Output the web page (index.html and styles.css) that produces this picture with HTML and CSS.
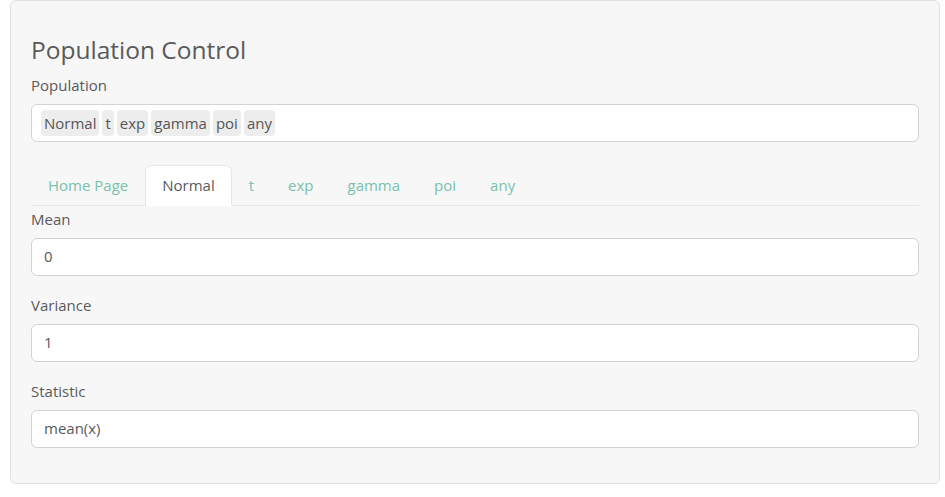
FILE: index.html
```html
<!DOCTYPE html>
<html>
<head>
<meta charset="utf-8">
<link rel="stylesheet" href="styles.css">
</head>
<body>
<div class="page">
  <div class="well">
    <h3 class="title">Population Control</h3>
    <div class="group group-pop">
      <label class="label">Population</label>
      <div class="tag-input">
        <span class="tag">Normal</span><span class="tag">t</span><span class="tag">exp</span><span class="tag">gamma</span><span class="tag">poi</span><span class="tag">any</span>
      </div>
    </div>
    <ul class="tabs">
      <li class="tab">Home Page</li>
      <li class="tab active">Normal</li>
      <li class="tab">t</li>
      <li class="tab">exp</li>
      <li class="tab">gamma</li>
      <li class="tab">poi</li>
      <li class="tab">any</li>
    </ul>
    <div class="tab-body">
      <div class="group">
        <label class="label">Mean</label>
        <div class="field">0</div>
      </div>
      <div class="group">
        <label class="label">Variance</label>
        <div class="field">1</div>
      </div>
      <div class="group last">
        <label class="label">Statistic</label>
        <div class="field">mean(x)</div>
      </div>
    </div>
  </div>
</div>
</body>
</html>
```
FILE: styles.css
```css
* { box-sizing: border-box; }
html, body { margin: 0; padding: 0; background: #ffffff; }
body {
  font-family: "Open Sans", "Noto Sans", sans-serif;
  font-size: 15px;
  line-height: 1.5;
  color: #5a5a5a;
}
.page { padding: 0 5px 0 10px; }
.well {
  background: #f7f7f7;
  border: 1px solid #e0e0e0;
  border-radius: 6px;
  padding: 20px 20px 20px 20px;
}
.title {
  font-size: 24.5px;
  font-weight: 400;
  line-height: 1.1;
  margin: 16px 0 10px;
  color: #5a5a5a;
}
.label { display: block; margin-bottom: 8px; }
.group { margin-bottom: 17.5px; }
.group-pop { margin-bottom: 23px; }
.group.last { margin-bottom: 15px; }
.tag-input {
  height: 38px;
  background: #fff;
  border: 1px solid #ced4da;
  border-radius: 6px;
  padding: 5px 9px;
  display: flex;
  gap: 3px;
}
.tag {
  height: 26px;
  line-height: 26px;
  padding: 0 3px;
  background: #ededed;
  border-radius: 4px;
  color: #555;
}
.tabs {
  list-style: none;
  margin: 0;
  padding: 0;
  display: flex;
  border-bottom: 1px solid #e6e6e6;
}
.tab {
  padding: 8px 16px;
  border: 1px solid transparent;
  border-top-left-radius: 6px;
  border-top-right-radius: 6px;
  margin-bottom: -1px;
  color: #78c2ad;
}
.tab.active {
  background: #fff;
  color: #5a5a5a;
  border-color: #e6e6e6 #e6e6e6 #fff;
}
.tab-body { padding-top: 2px; }
.field {
  height: 38px;
  background: #fff;
  border: 1px solid #ced4da;
  border-radius: 6px;
  padding: 6px 12px;
  color: #5a5a5a;
}
```
